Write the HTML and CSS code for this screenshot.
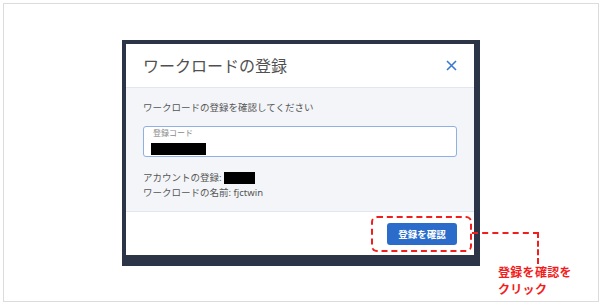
FILE: index.html
```html
<!DOCTYPE html>
<html lang="ja">

<head>
    <meta charset="UTF-8">
    <title>ワークロードの登録</title>
    <link rel="stylesheet" href="styles.css">
</head>

<body>
    <div class="sheet">
        <div class="frame">
            <div class="dialog">
                <div class="dialog-header">
                    <h1>ワークロードの登録</h1>
                    <svg class="close" width="11" height="11" viewBox="0 0 11 11">
                        <path d="M1 1 L10 10 M10 1 L1 10" stroke="#3a79d2" stroke-width="1.6" fill="none" />
                    </svg>
                </div>
                <div class="dialog-body">
                    <p class="lead">ワークロードの登録を確認してください</p>
                    <div class="field">
                        <span class="field-label">登録コード</span>
                        <span class="redact code"></span>
                    </div>
                    <p class="info">アカウントの登録: <span class="redact account"></span></p>
                    <p class="info">ワークロードの名前: fjctwin</p>
                </div>
                <div class="dialog-footer">
                    <div class="btn-wrap">
                        <button class="primary">登録を確認</button>
                        <span class="highlight"></span>
                    </div>
                </div>
            </div>
        </div>
        <div class="connector"></div>
        <p class="callout">登録を確認を<br>クリック</p>
    </div>
</body>

</html>
```

FILE: styles.css
```css
body {
    margin: 0;
    background: #fff;
    font-family: "Noto Sans", "Noto Sans CJK JP", sans-serif;
}

.sheet {
    position: relative;
    box-sizing: border-box;
    margin: 3px;
    height: 299px;
    border: 1px solid #dcdcdc;
    padding: 36px 0 0 118px;
}

.frame {
    width: 348px;
    background: #2c3547;
    padding: 4px 6px 11px 4px;
}

.dialog {
    background: #fff;
    height: 211px;
    display: flex;
    flex-direction: column;
}

.dialog-header {
    height: 43px;
    display: flex;
    align-items: center;
    justify-content: space-between;
    padding: 0 17px;
    border-bottom: 1px solid #e2e6ee;
}

.dialog-header h1 {
    margin: 0;
    font-size: 16px;
    font-weight: 400;
    color: #505050;
    line-height: 20px;
}

.dialog-body {
    height: 124px;
    box-sizing: border-box;
    background: #f3f5f9;
    border-bottom: 1px solid #e2e6ee;
    padding: 13px 17px 0;
}

.lead {
    margin: 0 0 11px;
    font-size: 9.5px;
    line-height: 14px;
    color: #555;
}

.field {
    box-sizing: border-box;
    height: 31px;
    background: #fff;
    border: 1px solid #8eb0e2;
    border-radius: 3px;
    padding: 1px 0 0 9px;
}

.field-label {
    display: block;
    font-size: 8px;
    line-height: 10px;
    color: #8a8a8a;
}

.redact {
    display: inline-block;
    background: #000;
}

.redact.code {
    width: 55px;
    height: 12px;
    margin: 3px 0 0 -2px;
}

.redact.account {
    width: 31px;
    height: 12px;
    vertical-align: middle;
}

.info {
    margin: 0;
    font-size: 9.5px;
    line-height: 15px;
    color: #555;
}

.field + .info {
    margin-top: 13px;
}

.dialog-footer {
    flex: 1;
    display: flex;
    justify-content: flex-end;
    align-items: flex-start;
    padding: 11px 17px 0 0;
}

.btn-wrap {
    position: relative;
}

button.primary {
    display: block;
    width: 70px;
    height: 22px;
    border: none;
    border-radius: 3px;
    background: #2b6ccb;
    color: #fff;
    font-family: inherit;
    font-size: 9.5px;
    font-weight: 700;
    padding: 0;
}

.highlight {
    position: absolute;
    left: -16px;
    right: -15px;
    top: -7px;
    bottom: -7px;
    border: 2px dashed #f21d1d;
    border-radius: 6px;
}

.connector {
    position: absolute;
    left: 468px;
    top: 228px;
    width: 65px;
    height: 30px;
    border-top: 2px dashed #f21d1d;
    border-right: 2px dashed #f21d1d;
}

.callout {
    position: absolute;
    left: 494px;
    top: 260px;
    margin: 0;
    font-size: 12px;
    line-height: 17px;
    font-weight: 700;
    letter-spacing: 0.3px;
    color: #f21d1d;
}
```
